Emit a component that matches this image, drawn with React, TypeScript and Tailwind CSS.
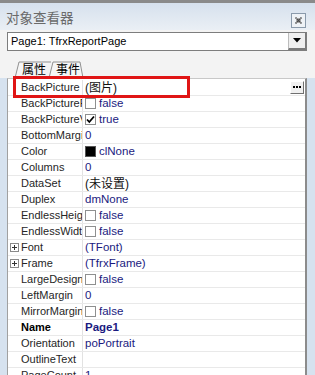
import React from "react";

type Row = {
  name: string;
  value?: string;
  kind?: "check" | "checked" | "color" | "plus" | "text";
  bold?: boolean;
  dark?: boolean;
};

const rows: Row[] = [
  { name: "BackPicture", value: "(图片)", dark: true },
  { name: "BackPictureP", value: "false", kind: "check" },
  { name: "BackPictureVi", value: "true", kind: "checked" },
  { name: "BottomMargin", value: "0" },
  { name: "Color", value: "clNone", kind: "color" },
  { name: "Columns", value: "0" },
  { name: "DataSet", value: "(未设置)", dark: true },
  { name: "Duplex", value: "dmNone" },
  { name: "EndlessHeight", value: "false", kind: "check" },
  { name: "EndlessWidth", value: "false", kind: "check" },
  { name: "Font", value: "(TFont)", kind: "plus" },
  { name: "Frame", value: "(TfrxFrame)", kind: "plus" },
  { name: "LargeDesignHeight", value: "false", kind: "check" },
  { name: "LeftMargin", value: "0" },
  { name: "MirrorMargins", value: "false", kind: "check" },
  { name: "Name", value: "Page1", bold: true },
  { name: "Orientation", value: "poPortrait" },
  { name: "OutlineText", value: "" },
  { name: "PageCount", value: "1" },
];

const font = { fontFamily: '"Liberation Sans", "Noto Sans CJK SC", sans-serif' };

function Check({ checked }: { checked?: boolean }) {
  return (
    <span className="w-[11px] h-[11px] border border-[#8e8f8f] bg-white flex items-center justify-center mr-[3px] shrink-0">
      {checked && (
        <svg width="9" height="9" viewBox="0 0 9 9">
          <path d="M1 4.5 L3.3 7 L8 1.5" stroke="#000" strokeWidth="1.8" fill="none" />
        </svg>
      )}
    </span>
  );
}

export default function App() {
  return (
    <div
      className="w-[315px] h-[375px] overflow-hidden relative bg-[#dbe5f1] text-[11.5px] leading-none"
      style={font}
    >
      <div className="h-[3px] bg-[#8a8a8a]" />
      <div className="h-[27px] flex items-center justify-between pl-[6px] pr-[9px] bg-gradient-to-b from-[#d6e1ed] to-[#eaeff5]">
        <span className="text-[13.5px] text-[#6a6a6a] mt-[4px]">对象查看器</span>
        <span className="w-[15px] h-[15px] border border-[#8a9aab] bg-[#eef2f6] flex items-center justify-center mt-[7px]">
          <svg width="9" height="9" viewBox="0 0 9 9">
            <path d="M1.5 1.5 L7.5 7.5 M7.5 1.5 L1.5 7.5" stroke="#4a4a4a" strokeWidth="1.6" />
            <rect x="2.5" y="2.5" width="4" height="4" fill="none" stroke="#9a9a9a" strokeWidth="0.8" />
          </svg>
        </span>
      </div>
      <div className="h-[48px] bg-[#f3f3f3] pt-[2px] pl-[7px] pr-[8px] flex flex-col">
        <div className="h-[19px] border border-[#7d7d7d] bg-white flex items-stretch">
          <span className="flex-1 flex items-center pl-[3px] text-[11px] text-black">Page1: TfrxReportPage</span>
          <span className="w-[18px] bg-[#efefef] border-l border-[#bcbcbc] border-b-[2px] border-b-[#7a7a7a] border-r border-r-[#7a7a7a] flex items-center justify-center">
            <svg width="8" height="5" viewBox="0 0 8 5">
              <path d="M0 0 H8 L4 4.5 Z" fill="#000" />
            </svg>
          </span>
        </div>
        <div className="relative mt-[7px] h-[20px]">
          <svg className="absolute left-0 top-0" width="90" height="20" viewBox="0 0 90 20">
            <path d="M8 20 L12 4 L44 4" fill="#f6f6f6" stroke="#909090" strokeWidth="1" />
            <path d="M42 20 L46 4 L73 4 L76 20" fill="#f6f6f6" stroke="#909090" strokeWidth="1" />
          </svg>
          <span className="absolute left-[15px] top-[6px] text-[12px] text-black">属性</span>
          <span className="absolute left-[49px] top-[6px] text-[12px] text-black">事件</span>
        </div>
      </div>
      <div className="flex h-[297px]">
        <div className="w-[7px] bg-[#d6e2ef]" />
        <div className="w-[300px] border-l border-[#a0a0a0] border-t border-t-[#c8c8c8] border-r-[2px] border-r-[#8c8c8c] bg-white flex flex-col pt-[1px]">
          {rows.map((r, i) => (
            <div key={i} className="h-[16px] shrink-0 flex border-b border-[#e9e9e9]">
              <div className="w-[75px] shrink-0 flex items-center overflow-hidden whitespace-nowrap border-r border-[#e2e2e2] text-[#262626] text-[11px]">
                {r.kind === "plus" ? (
                  <span className="w-[9px] h-[9px] ml-[2px] mr-[2px] border border-[#8a8a8a] flex items-center justify-center shrink-0">
                    <svg width="7" height="7" viewBox="0 0 7 7">
                      <path d="M1 3.5 H6 M3.5 1 V6" stroke="#333" strokeWidth="1" />
                    </svg>
                  </span>
                ) : (
                  <span className="w-[13px] shrink-0" />
                )}
                <span className={r.bold ? "font-bold text-black" : ""}>{r.name}</span>
              </div>
              <div
                className={
                  "flex-1 flex items-center pl-[2px] whitespace-nowrap " +
                  (r.dark ? "text-[#111]" : "text-[#1a1a80]") +
                  (r.bold ? " font-bold" : "")
                }
              >
                {(r.kind === "check" || r.kind === "checked") && <Check checked={r.kind === "checked"} />}
                {r.kind === "color" && <span className="w-[11px] h-[11px] bg-black border border-[#555] mr-[3px]" />}
                <span className={r.dark ? "text-[12px]" : "text-[11.5px]"}>{r.value}</span>
                {i === 0 && (
                  <span className="ml-auto mr-[1px] w-[14px] h-[13px] bg-[#f0f0f0] border-r border-b border-[#707070] border-l border-t border-l-white border-t-white flex items-center justify-center">
                    <svg width="8" height="3" viewBox="0 0 8 3">
                      <rect x="0" y="0" width="2" height="2" fill="#000" />
                      <rect x="3" y="0" width="2" height="2" fill="#000" />
                      <rect x="6" y="0" width="2" height="2" fill="#000" />
                    </svg>
                  </span>
                )}
              </div>
            </div>
          ))}
        </div>
        <div className="flex-1 bg-[#d6e2ef]" />
      </div>
      <div className="absolute left-[13px] top-[76px] w-[177px] h-[22px] border-[3px] border-[#e01515] pointer-events-none" />
    </div>
  );
}
